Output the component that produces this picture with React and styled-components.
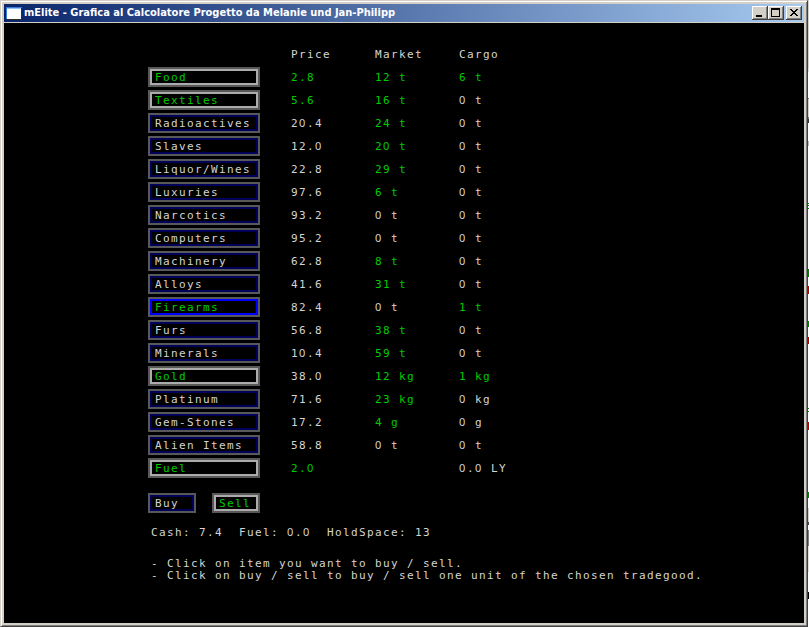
import React from "react";
import styled, { createGlobalStyle, css } from "styled-components";

const GlobalStyle = createGlobalStyle`
  body { margin: 0; overflow: hidden; background: #fff; }
  *, *::before, *::after { box-sizing: border-box; }
`;

const GREEN = "#00cb00";
const WHITE = "#d4d4d4";

const Desktop = styled.div`
  display: flex;
  width: 809px;
  height: 627px;
`;

const Window = styled.div`
  display: flex;
  flex-direction: column;
  width: 808px;
  height: 627px;
  padding: 3px;
  background: #d4d0c8;
  border: 1px solid;
  border-color: #d4d0c8 #404040 #404040 #d4d0c8;
  box-shadow: inset 1px 1px #fff, inset -1px -1px #808080;
`;

const TitleBar = styled.header`
  display: flex;
  align-items: center;
  flex: none;
  height: 18px;
  margin-bottom: 1px;
  padding: 0 2px;
  background: linear-gradient(90deg, #0a246a, #a6caf0);
`;

const Title = styled.h1`
  flex: 1;
  margin: 0 0 0 2px;
  color: #fff;
  font: bold 11px/18px "DejaVu Sans Condensed", "DejaVu Sans", sans-serif;
  font-stretch: condensed;
  white-space: pre;
`;

const CaptionButton = styled.button`
  display: block;
  width: 16px;
  height: 14px;
  padding: 0;
  margin-left: ${(p) => (p.$apart ? 2 : 0)}px;
  border: 0;
  background: #d4d0c8;
  box-shadow: inset -1px -1px #404040, inset 1px 1px #fff, inset -2px -2px #808080;
  svg { display: block; }
`;

const Screen = styled.main`
  flex: 1;
  min-height: 0;
  padding: 21px 0 0 144px;
  background: #000;
  color: ${WHITE};
  font: 11px/22px "DejaVu Sans Mono", monospace;
  letter-spacing: 1.378px;
  white-space: pre;
`;

const OpenZero = styled.span`
  font-family: "Noto Sans", sans-serif;
  line-height: 1;
  letter-spacing: 1.708px;
`;

const GoodsRow = styled.div`
  display: grid;
  grid-template-columns: 112px 115px 84px 100px;
  height: 20px;
  margin-bottom: 3px;
`;

const Cell = styled.span`
  height: 20px;
  color: ${(p) => (p.$green ? GREEN : WHITE)};
  ${(p) => p.$first && css`margin-left: 31px;`}
`;

const frames = { idle: "#000058", traded: "#acacac", selected: "#0000ff" };

const GameButton = styled.button`
  display: block;
  width: ${(p) => p.$width || 112}px;
  height: 20px;
  padding: 1px 0 0 5px;
  border: 2px solid #585858;
  box-shadow: inset 0 0 0 2px ${(p) => frames[p.$state]};
  background: #000;
  color: ${(p) => (p.$state === "idle" ? WHITE : GREEN)};
  font: inherit;
  line-height: 15px;
  letter-spacing: inherit;
  text-align: left;
  white-space: pre;
`;

const Actions = styled.div`
  display: flex;
  gap: 16px;
  margin-top: 15px;
`;

const Status = styled.p`
  height: 20px;
  margin: 9px 0 0 3px;
`;

const Help = styled.div`
  margin: 16px 0 0 3px;
  line-height: 12px;
`;

const Behind = styled.div`
  width: 1px;
  height: 627px;
  background: linear-gradient(
    #d4d0c8 0 68px, #ddd 68px 72px, #fff 72px 98px, #777 98px 99px,
    #d4d0c8 99px 117px, #777 117px 119px, #333 119px 123px, #fff 123px 141px,
    #bbb 141px 146px, #fff 146px 203px, #008000 203px 204px, #fff 204px 205px,
    #008000 205px 206px, #fff 206px 208px, #008000 208px 209px, #fff 209px 269px,
    #008000 269px 277px, #fff 277px 286px, #b00000 286px 294px, #fff 294px 321px,
    #008000 321px 327px, #fff 327px 337px, #b00000 337px 344px, #fff 344px 408px,
    #008000 408px 409px, #fff 409px 411px, #008000 411px 412px, #fff 412px 422px,
    #b00000 422px 430px, #fff 430px 492px, #008000 492px 498px, #fff 498px 508px,
    #d4d0c8 508px 522px, #444 522px 525px, #fff 525px 530px, #808080 530px 546px,
    #e4e0d8 546px 572px, #fff 572px 592px, #000 592px 599px, #fff 599px
  );
`;

const goods = [
  ["Food", "2.8", "12 t", "6 t", "traded"],
  ["Textiles", "5.6", "16 t", "0 t", "traded"],
  ["Radioactives", "20.4", "24 t", "0 t"],
  ["Slaves", "12.0", "20 t", "0 t"],
  ["Liquor/Wines", "22.8", "29 t", "0 t"],
  ["Luxuries", "97.6", "6 t", "0 t"],
  ["Narcotics", "93.2", "0 t", "0 t"],
  ["Computers", "95.2", "0 t", "0 t"],
  ["Machinery", "62.8", "8 t", "0 t"],
  ["Alloys", "41.6", "31 t", "0 t"],
  ["Firearms", "82.4", "0 t", "1 t", "selected"],
  ["Furs", "56.8", "38 t", "0 t"],
  ["Minerals", "10.4", "59 t", "0 t"],
  ["Gold", "38.0", "12 kg", "1 kg", "traded"],
  ["Platinum", "71.6", "23 kg", "0 kg"],
  ["Gem-Stones", "17.2", "4 g", "0 g"],
  ["Alien Items", "58.8", "0 t", "0 t"],
  ["Fuel", "2.0", "", "0.0 LY", "traded"],
];

const affordable = new Set(["Food", "Textiles", "Fuel"]);

function Text({ children }) {
  return children
    .split(/(0)/)
    .map((part, i) => (part === "0" ? <OpenZero key={i}>0</OpenZero> : part));
}

export default function App() {
  return (
    <Desktop>
      <GlobalStyle />
      <Window>
        <TitleBar>
          <svg width="16" height="14" shapeRendering="crispEdges">
            <path d="M0 1h16v12H0z" fill="#3a7ad8" />
            <path d="M1 2h14v11H1z" fill="#fff" />
            <path d="M1 2h14v1H1z" fill="#8ec2f8" />
            <path d="M15 2h1v12H1v-1h14z" fill="#302c28" />
          </svg>
          <Title>mElite - Grafica al Calcolatore Progetto da Melanie und Jan-Philipp</Title>
          <CaptionButton aria-label="Minimize">
            <svg width="16" height="14" shapeRendering="crispEdges"><path d="M4 9h6v2H4z" /></svg>
          </CaptionButton>
          <CaptionButton aria-label="Maximize">
            <svg width="16" height="14" shapeRendering="crispEdges"><path fillRule="evenodd" d="M3 2h9v9H3zM4 4v6h7V4z" /></svg>
          </CaptionButton>
          <CaptionButton aria-label="Close" $apart>
            <svg width="16" height="14" shapeRendering="crispEdges">
              <path d="M4 3h2v1h1v1h2V4h1V3h2v1h-1v1h-1v1H9v1h1v1h1v1h1v1h-2V9H9V8H7v1H6v1H4V9h1V8h1V7h1V6H6V5H5V4H4z" />
            </svg>
          </CaptionButton>
        </TitleBar>
        <Screen>
          <GoodsRow>
            <span />
            <Cell $first>Price</Cell>
            <Cell>Market</Cell>
            <Cell>Cargo</Cell>
          </GoodsRow>
          {goods.map(([name, price, market, cargo, state = "idle"]) => (
            <GoodsRow key={name}>
              <GameButton $state={state}>{name}</GameButton>
              <Cell $first $green={affordable.has(name)}><Text>{price}</Text></Cell>
              <Cell $green={!market.startsWith("0")}><Text>{market}</Text></Cell>
              <Cell $green={!cargo.startsWith("0")}><Text>{cargo}</Text></Cell>
            </GoodsRow>
          ))}
          <Actions>
            <GameButton $state="idle" $width={48}>Buy</GameButton>
            <GameButton $state="traded" $width={48}>Sell</GameButton>
          </Actions>
          <Status><Text>{"Cash: 7.4  Fuel: 0.0  HoldSpace: 13"}</Text></Status>
          <Help>
            <div>- Click on item you want to buy / sell.</div>
            <div>- Click on buy / sell to buy / sell one unit of the chosen tradegood.</div>
          </Help>
        </Screen>
      </Window>
      <Behind />
    </Desktop>
  );
}
